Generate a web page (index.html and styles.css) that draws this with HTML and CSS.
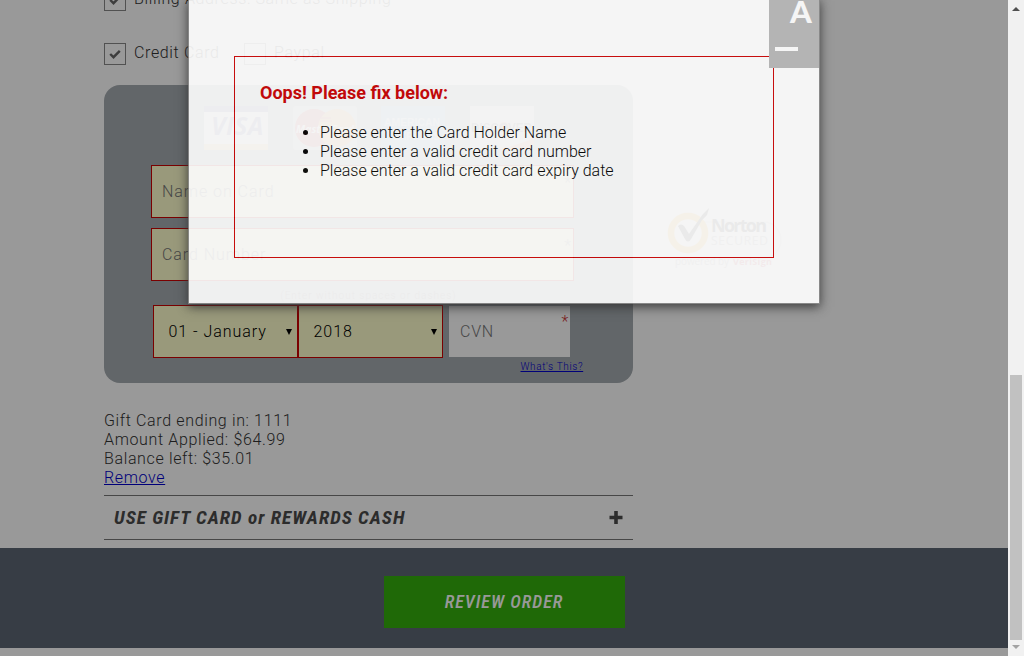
FILE: index.html
```html
<!DOCTYPE html>
<html lang="en">
<head>
<meta charset="utf-8">
<title>Checkout</title>
<link rel="stylesheet" href="styles.css">
</head>
<body>
<div class="window">
  <div class="page">
    <div class="columns">
      <main class="main">
        <div class="options options-first">
          <label class="option"><span class="box"><svg viewBox="0 0 12 10" width="12" height="10"><path d="M1.2 5 4.5 8.2 10.8 1.8"/></svg></span>Billing Address: Same as Shipping</label>
        </div>
        <div class="options">
          <label class="option"><span class="box"><svg viewBox="0 0 12 10" width="12" height="10"><path d="M1.2 5 4.5 8.2 10.8 1.8"/></svg></span>Credit Card</label>
          <label class="option"><span class="box"></span>Paypal</label>
        </div>
        <section class="panel">
          <div class="cards">
            <svg viewBox="0 0 64 44" width="64" height="44"><rect width="64" height="44" fill="#f4f4f4"/><rect width="64" height="6" fill="#7878b4"/><rect y="38" width="64" height="6" fill="#f0cc90"/><text x="7" y="29" class="visa" textLength="53">VISA</text></svg>
            <svg viewBox="0 0 64 44" width="64" height="44"><rect width="64" height="44" rx="3" fill="#c8d0d3"/><circle cx="21" cy="22" r="19" fill="#dd5656"/><circle cx="44" cy="22" r="19" fill="#f3b661"/><path d="M28 12h10M27 15h12" stroke="#dd5656"/><text x="3" y="27" class="master" textLength="58" lengthAdjust="spacingAndGlyphs">MasterCard</text></svg>
            <svg viewBox="0 0 64 44" width="64" height="44"><rect width="64" height="44" fill="#93c5e4"/><text x="3" y="20" class="amex" textLength="56" lengthAdjust="spacingAndGlyphs">AMERICAN</text><text x="12" y="34" class="amex" textLength="47">EXPRESS</text></svg>
            <svg viewBox="0 0 64 44" width="64" height="44"><rect width="64" height="44" fill="#ececec"/><path d="M64 32C48 39 35 42 24 44h40z" fill="#f2a080"/><circle cx="34" cy="21" r="5" fill="#f2a080"/><text x="1" y="26" class="discover" textLength="61" lengthAdjust="spacingAndGlyphs">DISCOVER</text></svg>
          </div>
          <div class="field">Name on Card<span class="star">*</span></div>
          <div class="field">Card Number<span class="star">*</span></div>
          <div class="hint">(Enter without spaces or dashes)</div>
          <div class="expiry">
            <div class="select">01 - January<i class="arrow"></i></div>
            <div class="select">2018<i class="arrow"></i></div>
            <div class="cvn">CVN<span class="star">*</span></div>
          </div>
          <a class="what">What's This?</a>
        </section>
        <div class="gift">
          <p>Gift Card ending in: 1111</p>
          <p>Amount Applied: $64.99</p>
          <p>Balance left: $35.01</p>
          <a>Remove</a>
        </div>
        <div class="accordion">
          <span class="condensed">USE GIFT CARD or REWARDS CASH</span>
          <svg viewBox="0 0 14 14" width="14" height="14"><path d="M7 0v13M.5 6.5h13" stroke="#4a4a4a" stroke-width="3.6"/></svg>
        </div>
      </main>
      <aside class="seal">
        <svg viewBox="0 0 118 66" width="118" height="66">
          <path d="M38 16h60a17 18 0 0 1 0 36H32" fill="none" stroke="#ddd"/>
          <circle cx="22" cy="27" r="17" fill="none" stroke="#ffc83c" stroke-width="6.5"/>
          <path d="M12 20q3-3 6 0l5 8L37 8l6-6-2 7-5 5-11 19q-3 5-6 0z" fill="#444"/>
          <text x="45" y="26" class="norton" textLength="56">Norton</text>
          <text x="45" y="39" class="secured" textLength="57">SECURED</text>
          <text x="9" y="59" class="powered" textLength="54">powered by</text>
          <text x="67" y="59" class="verisign" textLength="39">VeriSign</text>
        </svg>
      </aside>
    </div>
    <footer class="footer"><div class="review"><span class="condensed">REVIEW ORDER</span></div></footer>
    <div class="overlay"></div>
    <div class="modal">
      <div class="errors">
        <h2>Oops! Please fix below:</h2>
        <ul>
          <li>Please enter the Card Holder Name</li>
          <li>Please enter a valid credit card number</li>
          <li>Please enter a valid credit card expiry date</li>
        </ul>
      </div>
      <div class="close"><span>A</span><i></i></div>
    </div>
  </div>
  <div class="scrollbar"><i class="up"></i><i class="thumb"></i><i class="down"></i></div>
</div>
</body>
</html>
```
FILE: styles.css
```css
* { box-sizing: border-box; }
body { margin: 0; font: 300 16px/19px Roboto, sans-serif; color: #333; overflow: hidden; }
p { margin: 0; }
.window { display: flex; height: 656px; overflow: hidden; }
.page { position: relative; width: 1008px; height: 656px; overflow: hidden; background: #fff; letter-spacing: 0.64px; }
.columns { display: flex; height: 548px; padding-left: 104px; }
.main { width: 529px; }
.options { display: flex; gap: 24.5px; height: 22px; margin-bottom: 20px; }
.options-first { margin-top: -11px; margin-bottom: 32px; }
.option { display: flex; gap: 8px; line-height: 19px; white-space: nowrap; }
.box { display: flex; align-items: center; justify-content: center; width: 22px; height: 22px; border: 1px solid #888; }
.box svg { fill: none; stroke: #666; stroke-width: 2.4; }
.panel { height: 298px; padding: 21px 0 0 47px; border-radius: 16px; background: #a4aaaf; }
.cards { display: flex; gap: 24.5px; height: 59px; padding-left: 53px; }
.visa { font: italic 700 25px "Open Sans", sans-serif; fill: #8080b4; }
.master { font: italic 700 11px "Open Sans", sans-serif; fill: #fff; letter-spacing: 0; }
.amex { font: 700 10px "Liberation Sans", sans-serif; fill: #dff2ff; letter-spacing: 0; }
.discover { font: 700 12px "Liberation Sans", sans-serif; fill: #777; letter-spacing: 0; }
.field { position: relative; width: 423px; height: 53px; margin-bottom: 10px; padding: 16px 10px; border: 1px solid #c00; background: #ffffcd; color: #777; letter-spacing: 0.95px; }
.star { position: absolute; top: 5px; right: 2px; color: #c33; }
.field .star { top: 7px; right: 1px; color: #999; }
.hint { height: 14px; width: 423px; padding-left: 12px; text-align: center; font-size: 10px; line-height: 10px; color: #555; letter-spacing: 1px; }
.expiry { display: flex; padding-left: 2px; }
.select { display: flex; align-items: center; justify-content: space-between; width: 145px; height: 53px; padding: 0 5px 0 14.5px; border: 1px solid #c00; background: #ffffcd; color: #000; letter-spacing: 0.95px; }
.arrow { border: 3.5px solid transparent; border-top: 6px solid #000; border-bottom: 0; }
.cvn { position: relative; width: 121px; height: 51px; margin: 1px 0 0 6px; padding: 16px 11px; background: #fff; color: #777; letter-spacing: 0.8px; }
.cvn .star { top: 6px; right: 1px; }
.what { display: block; width: max-content; margin: 3px 0 0 369.5px; font-size: 10px; line-height: 12px; color: #00c; text-decoration: underline; letter-spacing: 0.64px; }
.gift { padding-top: 28px; height: 112px; }
.gift a { color: #00c; text-decoration: underline; }
.accordion { display: flex; align-items: center; justify-content: space-between; height: 45px; padding: 0 10px; border-top: 1px solid #777; border-bottom: 1px solid #777; }
.condensed { display: inline-block; font: italic 700 19.2px/22px Roboto, sans-serif; font-stretch: 75%; letter-spacing: 1px; color: #4a4a4a; white-space: nowrap; }
.seal { padding: 206px 0 0 33px; letter-spacing: 0; }
.norton { font: 700 18px "Open Sans", sans-serif; fill: #444; }
.secured { font: 400 12px "Open Sans", sans-serif; fill: #aaa; }
.powered { font: 400 10px "Open Sans", sans-serif; fill: #aaa; }
.verisign { font: 700 9px "Open Sans", sans-serif; fill: #e04a60; }
.footer { display: flex; justify-content: center; align-items: center; height: 100px; padding-top: 8px; background: #5c6773; }
.review { display: flex; justify-content: center; align-items: center; width: 241px; height: 52px; background: #34af0d; }
.review .condensed { font-size: 18px; font-weight: 500; letter-spacing: 1px; color: #fff; }
.overlay { position: absolute; inset: 0; background: rgba(0, 0, 0, .4); }
.modal { position: absolute; left: 189px; top: -1px; width: 630px; height: 304px; padding: 57px 45px 45px; background: #fff; opacity: .9; box-shadow: 0 0 0 1px #888, 0 3px 10px 1px #333; letter-spacing: 0; color: #000; }
.errors { height: 202px; padding: 25px; border: 1px solid #c00; }
.errors h2 { margin: 0 0 19px; font: 700 18px/22px Roboto, sans-serif; color: #c00; }
.errors ul { margin: 0; padding-left: 60px; }
.close { position: absolute; right: 0; top: 1px; width: 50px; height: 68px; background: #b8b8b8; color: #fff; }
.close span { position: absolute; left: 21px; top: -7px; font: 900 31px/36px Lato, sans-serif; }
.close i { position: absolute; left: 6px; top: 47px; width: 23px; height: 4px; background: #fff; }
.scrollbar { display: flex; flex-direction: column; align-items: center; width: 16px; padding: 7px 0; background: #f1f1f1; }
.up { border: 4px solid transparent; border-top: 0; border-bottom-color: #505050; }
.thumb { width: 12px; height: 265px; margin: 364px 0 5px; background: #c1c1c1; }
.down { border: 4px solid transparent; border-bottom: 0; border-top-color: #a3a3a3; }
```
